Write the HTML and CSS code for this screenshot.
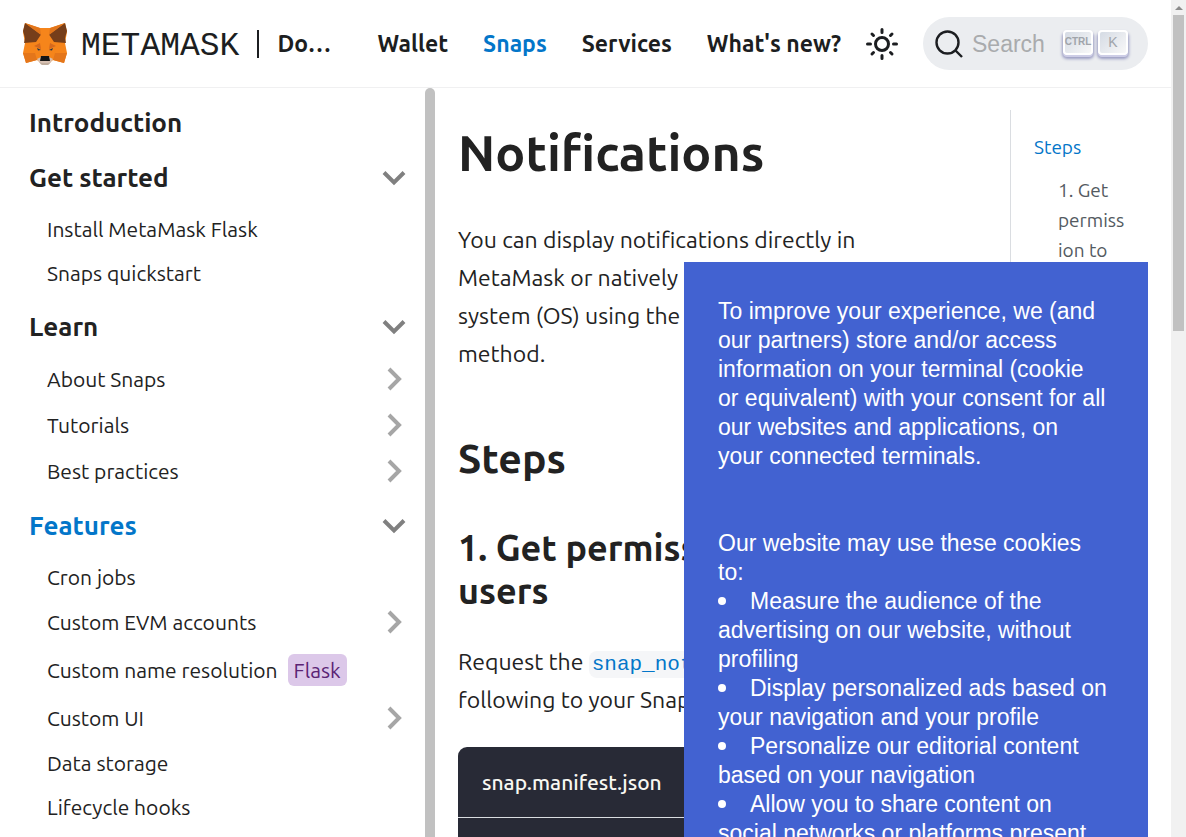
FILE: index.html
```html
<!DOCTYPE html>
<html lang="en">
<head>
<meta charset="utf-8">
<title>Notifications | MetaMask Documentation</title>
<link rel="stylesheet" href="styles.css">
</head>
<body>
<svg class="symbols" aria-hidden="true">
  <symbol id="down" viewBox="0 0 24 16"><path d="M2 2.500 12 12.500 22 2.500" fill="none" stroke="currentColor" stroke-width="4"/></symbol>
  <symbol id="right" viewBox="0 0 16 24"><path d="M3 2 13 12 3 22" fill="none" stroke="currentColor" stroke-width="4"/></symbol>
</svg>
<div class="page">
  <header class="navbar">
    <a class="brand" href="#">
      <svg class="fox" viewBox="0 0 44 42" aria-hidden="true">
        <path d="M2 0 17 5h10L42 0l2 9-2 11 2 10-3 10-11-3-5 4h-6l-5-4-11 3-3-10 2-10L0 9z" fill="#f6851b"/>
        <path d="M2 0 18 11.500 13 19 1 20 2 15 0 8z" fill="#763e1a"/>
        <path d="M42 0 26 11.500 31 19l12 1-1-5 2-7z" fill="#763e1a"/>
        <path d="M2 0 17 5l1 7zM42 0 27 5l-1 7z" fill="#e2761b"/>
        <path d="M0 30h12l2 7-11 3zM44 30H32l-2 7 11 3z" fill="#e4761b"/>
        <path d="M12 30 2 20l11 2zM32 30l10-10-11 2z" fill="#f6851b"/>
        <path d="m17 20-6 3 7 3zM27 20l6 3-7 3z" fill="#d7691d"/>
        <path d="m14 25 4 2-3 .5zM30 25l-4 2 3 .5z" fill="#233447"/>
        <path d="m14 36 4-2h8l4 2-4 5.500h-8z" fill="#d7c1b3"/>
        <path d="m16 39 3 1h6l3-1-3 3h-6z" fill="#c0ad9e"/>
        <path d="M18 33h8l1 5H17z" fill="#161616"/>
      </svg>
      <span class="wordmark">METAMASK</span>
      <span class="divider"></span>
      <span class="site">Documentation</span>
    </a>
    <nav class="links">
      <a href="#">Wallet</a>
      <a href="#" class="current">Snaps</a>
      <a href="#">Services</a>
      <a href="#">What's new?</a>
    </nav>
    <button class="theme" type="button" aria-label="Switch theme">
      <svg viewBox="0 0 32 32" fill="none" stroke="currentColor" stroke-width="3" stroke-linecap="round"><circle cx="16" cy="16" r="6.500"/><path d="M16 1.500v3M16 27.500v3M1.500 16h3M27.500 16h3M6 6l1.500 1.500M24.500 24.500 26 26M6 26l1.500-1.500M24.500 7.500 26 6"/></svg>
    </button>
    <button class="search" type="button">
      <svg class="glass" viewBox="0 0 28 28" fill="none" stroke="currentColor" stroke-width="2.400"><circle cx="12.500" cy="12.500" r="11"/><path d="m20 20 7 7"/></svg>
      <span class="search-label">Search</span>
      <kbd class="ctrl">CTRL</kbd>
      <kbd>K</kbd>
    </button>
  </header>

  <div class="body">
    <div class="sidebar">
      <nav class="menu">
        <a class="top" href="#">Introduction</a>
        <a class="top" href="#">Get started<svg class="down"><use href="#down"/></svg></a>
        <ul>
          <li><a href="#">Install MetaMask Flask</a></li>
          <li><a href="#">Snaps quickstart</a></li>
        </ul>
        <a class="top" href="#">Learn<svg class="down"><use href="#down"/></svg></a>
        <ul>
          <li><a class="group" href="#">About Snaps<svg class="right"><use href="#right"/></svg></a></li>
          <li><a class="group" href="#">Tutorials<svg class="right"><use href="#right"/></svg></a></li>
          <li><a class="group" href="#">Best practices<svg class="right"><use href="#right"/></svg></a></li>
        </ul>
        <a class="top current" href="#">Features<svg class="down"><use href="#down"/></svg></a>
        <ul>
          <li><a href="#">Cron jobs</a></li>
          <li><a class="group" href="#">Custom EVM accounts<svg class="right"><use href="#right"/></svg></a></li>
          <li><a class="tagged" href="#">Custom name resolution<span class="flask">Flask</span></a></li>
          <li><a class="group" href="#">Custom UI<svg class="right"><use href="#right"/></svg></a></li>
          <li><a href="#">Data storage</a></li>
          <li><a href="#">Lifecycle hooks</a></li>
        </ul>
      </nav>
      <div class="menu-scroll"></div>
    </div>

    <main class="article">
      <h1>Notifications</h1>
      <p>You can display notifications directly in MetaMask or natively in a user's operating system (OS) using the <a href="#"><code>snap_notify</code></a> API method.</p>
      <h2>Steps</h2>
      <h3>1. Get permission to notify users</h3>
      <p>Request the <a href="#"><code>snap_notify</code></a> permission. Add the following to your Snap's manifest file:</p>
      <div class="code">
        <div class="code-title">snap.manifest.json</div>
      </div>
    </main>

    <aside class="toc">
      <a class="current" href="#">Steps</a>
      <ul><li><a href="#">1. Get permission to notify users</a></li></ul>
    </aside>
  </div>
</div>

<div class="page-scroll" aria-hidden="true">
  <span class="arrow"></span>
  <span class="thumb"></span>
</div>

<section class="cookies" role="dialog" aria-label="Cookie consent">
  <p>To improve your experience, we (and our partners) store and/or access information on your terminal (cookie or equivalent) with your consent for all our websites and applications, on your connected terminals.</p>
  <p>Our website may use these cookies to:</p>
  <ul>
    <li>Measure the audience of the advertising on our website, without profiling</li>
    <li>Display personalized ads based on your navigation and your profile</li>
    <li>Personalize our editorial content based on your navigation</li>
    <li>Allow you to share content on social networks or platforms present</li>
  </ul>
</section>
</body>
</html>
```

FILE: styles.css
```css
* { box-sizing: border-box; }

body {
  margin: 0;
  height: 100vh;
  overflow: hidden;
  display: flex;
  background: #fff;
  color: #222;
  font-family: Ubuntu, "Noto Sans", sans-serif;
  font-size: 21px;
}

a { color: inherit; text-decoration: none; }
ul { list-style: none; margin: 0; padding: 0; }
button { border: 0; padding: 0; background: none; color: inherit; }
.symbols { position: absolute; width: 0; height: 0; }

.page {
  flex: 1;
  min-width: 0;
  display: flex;
  flex-direction: column;
}

/* Top bar */
.navbar {
  flex: none;
  display: flex;
  align-items: center;
  height: 88px;
  padding: 0 23px;
  border-bottom: 1px solid #f0f0f1;
  font-weight: 600;
  color: #1c1e21;
}
.brand { display: flex; align-items: center; min-width: 0; }
.fox { width: 44px; height: 42px; flex: none; }
.wordmark {
  margin-left: 14px;
  padding-top: 6px;
  font: 33px/40px "Liberation Mono", monospace;
}
.divider { width: 2px; height: 28px; margin: 0 18px; background: #1c1e21; }
.site { width: 60px; font-size: 23px; overflow: hidden; text-overflow: ellipsis; white-space: nowrap; }
.links { display: flex; gap: 35px; margin-left: auto; font-size: 23px; white-space: nowrap; }
.current { color: #0376c9; }
.theme { width: 32px; height: 32px; margin: 0 25px; flex: none; }
.theme svg { display: block; width: 32px; height: 32px; }
.search {
  flex: none;
  display: flex;
  align-items: center;
  width: 225px;
  height: 53px;
  padding: 0 20px 0 12px;
  border-radius: 27px;
  background: #ebedf0;
}
.glass { width: 28px; height: 28px; }
.search-label {
  flex: 1;
  padding-left: 9px;
  text-align: left;
  font: 23px/28px "Liberation Sans", sans-serif;
  color: #a9abad;
}
kbd {
  display: flex;
  align-items: center;
  justify-content: center;
  width: 30px;
  height: 25px;
  margin: 0 0 3px 5px;
  border: 2px solid #fff;
  border-radius: 4px;
  background: linear-gradient(135deg, #d5dbe4, #f8f8f8);
  box-shadow: 0 2px 0 #cdcde6, 0 3px 3px 1px #9a9cc2;
  font: 14px/20px "Liberation Sans", sans-serif;
  color: #a0a4aa;
}
.ctrl { font-size: 10px; font-weight: 700; }

/* Columns below the bar */
.body { flex: 1; min-height: 0; display: flex; }

.sidebar { flex: none; width: 435px; display: flex; overflow: hidden; }
.menu { flex: 1; padding: 7px 19px 0 29px; }
.menu ul { padding: 2px 0 4px 18px; }
.menu a { display: flex; align-items: center; height: 44px; font-size: 21px; }
.menu .group { height: 46px; }
.menu .tagged { height: 50px; }
.menu .top { height: 55px; font-size: 26px; font-weight: 700; }
.down { width: 24px; height: 16px; margin-left: auto; color: #808080; }
.right { width: 16px; height: 24px; margin: 0 4px 0 auto; color: #a6a6a6; }
.flask {
  margin-left: 10px;
  padding: 0 6px;
  border-radius: 6px;
  background: #dcc8e9;
  color: #5b2374;
  line-height: 32px;
}
.menu-scroll { width: 10px; border-radius: 5px 5px 0 0; background: #c1c1c1; }

/* Article */
.article { flex: 1; min-width: 0; padding: 34px 60px 0 23px; overflow: hidden; }
h1, h2, h3 { margin: 0; font-weight: 700; }
h1 { font-size: 50px; line-height: 60px; }
h2 { margin-top: 60px; font-size: 41px; line-height: 50px; }
h3 { margin-top: 43px; font-size: 36px; line-height: 43px; }
.article p { margin: 39px 0 0; font-size: 23px; line-height: 38px; }
.article h3 + p { margin-top: 31px; }
code {
  padding: 2px 3px;
  border-radius: 8px;
  background: #f5f6f8;
  color: #0376c9;
  font: 21px "Liberation Mono", monospace;
}
.code { margin-top: 28px; height: 300px; border-radius: 9px; background: #282a36; }
.code-title {
  padding: 0 24px;
  border-bottom: 1px solid #dadde1;
  color: #f8f8f2;
  font-size: 21px;
  font-weight: 500;
  line-height: 70px;
}

/* On-page contents */
.toc {
  flex: none;
  width: 138px;
  margin: 22px 23px 0 0;
  padding: 22px 22px 0 23px;
  border-left: 1px solid #dadde1;
  font-size: 19px;
  line-height: 30px;
}
.toc ul { padding: 13px 0 0 24px; }
.toc li { color: #535a61; overflow-wrap: anywhere; }

/* Window scroll bar */
.page-scroll {
  width: 15px;
  padding: 6px 2px 0;
  background: #f1f1f1;
}
.arrow {
  display: block;
  width: 0;
  margin: 0 auto 5px;
  border: 4px solid transparent;
  border-top: 0;
  border-bottom-color: #8b8b8b;
}
.thumb { display: block; height: 316px; background: #c1c1c1; }

/* Cookie notice */
.cookies {
  position: fixed;
  top: 262px;
  right: 38px;
  bottom: 0;
  width: 464px;
  padding: 35px 40px 0 34px;
  overflow: hidden;
  background: #4262d1;
  color: #fff;
  font: 23px/29px "Liberation Sans", sans-serif;
}
.cookies p { margin: 0; }
.cookies p + p { margin-top: 58px; }
.cookies li::before {
  content: "";
  display: inline-block;
  width: 8px;
  height: 8px;
  margin-right: 24px;
  border-radius: 50%;
  background: #fff;
  vertical-align: 4px;
}
```
